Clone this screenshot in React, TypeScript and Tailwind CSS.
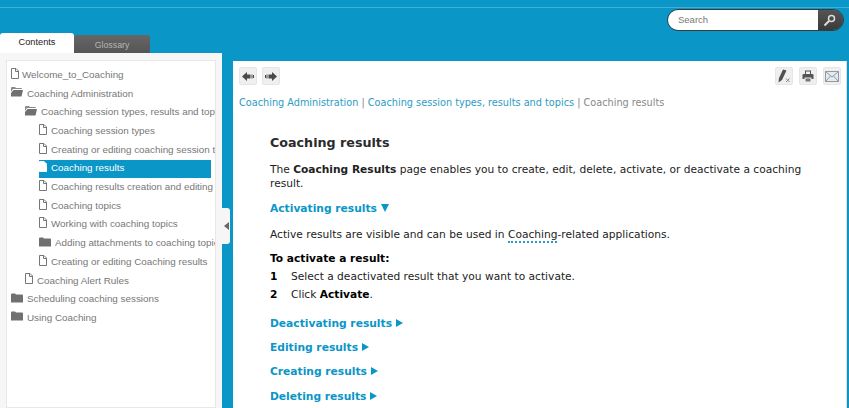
import React from "react";

const Doc = ({ active }: { active?: boolean }) => (
  <svg width="8" height="11" viewBox="0 0 8 11" className="shrink-0">
    {active ? (
      <path d="M.5.500h4.500l2.500 2.500v7.500h-7z" fill="#fff" stroke="#fff" />
    ) : (
      <path d="M.5.500h4.500l2.500 2.500v7.500h-7zM4.500.5v3h3" fill="#fff" stroke="#777" />
    )}
  </svg>
);
const Folder = () => (
  <svg width="12" height="10" viewBox="0 0 12 10" className="shrink-0">
    <path d="M0 1.500Q0 .5 1 .5h3l1 1h6q1 0 1 1V9.500H0z" fill="#707070" />
  </svg>
);
const FolderOpen = () => (
  <svg width="12" height="10" viewBox="0 0 12 10" className="shrink-0">
    <path d="M0 1Q0 0 1 0h3l1 1h5q1 0 1 1H2L0 5z" fill="#8a8a8a" />
    <path d="M2.500 3H12L10.500 9.500H0V6z" fill="#707070" />
  </svg>
);

type Row = { t: string; pl: number; k: "d" | "f" | "o"; a?: boolean; gap: number };
const rows: Row[] = [
  { t: "Welcome_to_Coaching", pl: 4, k: "d", gap: 3 },
  { t: "Coaching Administration", pl: 4, k: "o", gap: 4 },
  { t: "Coaching session types, results and topics", pl: 18, k: "o", gap: 4 },
  { t: "Coaching session types", pl: 32, k: "d", gap: 4 },
  { t: "Creating or editing coaching session types", pl: 32, k: "d", gap: 4 },
  { t: "Coaching results", pl: 32, k: "d", a: true, gap: 4 },
  { t: "Coaching results creation and editing", pl: 32, k: "d", gap: 4 },
  { t: "Coaching topics", pl: 32, k: "d", gap: 4 },
  { t: "Working with coaching topics", pl: 32, k: "d", gap: 4 },
  { t: "Adding attachments to coaching topics", pl: 32, k: "f", gap: 4 },
  { t: "Creating or editing Coaching results", pl: 32, k: "d", gap: 4 },
  { t: "Coaching Alert Rules", pl: 18, k: "d", gap: 4 },
  { t: "Scheduling coaching sessions", pl: 4, k: "f", gap: 4 },
  { t: "Using Coaching", pl: 4, k: "f", gap: 4 },
];

const ToolBtn = ({ children }: { children: React.ReactNode }) => (
  <div className="w-[18px] h-[18px] rounded-[2px] bg-[#efefef] border border-[#e6e6e6] flex items-center justify-center">
    {children}
  </div>
);

const Section = ({ t }: { t: string }) => (
  <div className="flex items-center gap-[4px] text-[#0b96c8] font-bold text-[10.700px] leading-[16px] mt-[8.300px]">
    <span>{t}</span>
    <svg width="7" height="8" viewBox="0 0 7 8" className="-translate-y-[1px]"><path d="M0 0l7 4-7 4z" fill="#0b96c8" /></svg>
  </div>
);

export default function App() {
  return (
    <div className="w-[849px] h-[408px] overflow-hidden bg-[#0b96c8] flex flex-col font-['Liberation_Sans',sans-serif]">
      <div className="h-[33px] shrink-0 flex flex-col">
        <div className="h-[7px] border-b border-[#3fb0d8] shrink-0 box-content" />
        <div className="flex justify-end pr-[5px] pt-[1px]">
          <div className="w-[177px] h-[22px] flex rounded-full overflow-hidden border border-[#3a3a3a]">
            <div className="flex-1 bg-white pl-[10px] text-[9.500px] leading-[19px] text-[#777]">Search</div>
            <div className="w-[25px] bg-gradient-to-b from-[#555] to-[#3a3a3a] flex items-center justify-center pr-[3px]">
              <svg width="13" height="13" viewBox="0 0 13 13" fill="none">
                <circle cx="8.500" cy="4.500" r="3" stroke="#ddd" strokeWidth="1.500" />
                <path d="M6 7L1.500 11.500" stroke="#ddd" strokeWidth="2" />
              </svg>
            </div>
          </div>
        </div>
      </div>
      <div className="h-[20px] shrink-0 flex items-end">
        <div className="w-[74px] h-[20px] bg-white rounded-t-[3px] text-center text-[9.200px] leading-[19px] text-[#222]">Contents</div>
        <div className="w-[76px] h-[18px] bg-gradient-to-b from-[#666] to-[#555] rounded-t-[2px] text-center text-[8.800px] leading-[20px] text-[#b5b5b5]">Glossary</div>
      </div>
      <div className="flex-1 flex min-h-0">
        <div className="relative w-[222px] shrink-0 bg-[#f6f6f6] pl-[6px] pr-[6px] pt-[7px]">
          <div className="h-full bg-white border border-[#e8e8e8] overflow-hidden pt-[5px]">
            <div className="w-full overflow-hidden">
              {rows.map((r) => (
                <div
                  key={r.t}
                  className="h-[18.700px] flex items-center whitespace-nowrap text-[9.850px] text-[#777]"
                  style={{ paddingLeft: r.pl }}
                >
                  <div className={r.a ? "flex items-center h-[18px] w-[172px] bg-[#0b96c8] text-white" : "flex items-center h-[18px]"} style={{ gap: r.gap }}>
                    <span className="-translate-y-[2px]">
                      {r.k === "d" ? <Doc active={r.a} /> : r.k === "f" ? <Folder /> : <FolderOpen />}
                    </span>
                    <span>{r.t}</span>
                  </div>
                </div>
              ))}
            </div>
          </div>
          <div className="absolute left-[216px] top-[155px] w-[14px] h-[36px] bg-[#f6f6f6] rounded-r-[3px] flex items-center justify-end pr-[1px]">
            <svg width="5" height="8" viewBox="0 0 5 8"><path d="M5 0v8L0 4z" fill="#666" /></svg>
          </div>
        </div>
        <div className="ml-[11px] w-[614px] mt-[8px] bg-white border-r border-[#ddd] font-['DejaVu_Sans',sans-serif] overflow-hidden">
          <div className="flex justify-between pl-[6px] pr-[5px] pt-[6px]">
            <div className="flex gap-[5px]">
              <ToolBtn>
                <svg width="12" height="9" viewBox="0 0 12 9"><path d="M0 4.500L5 0v2.500h3.500v4H5V9zM9.500 2.500h1v4h-1zM11 3h1v3h-1z" fill="#4a4a4a" /></svg>
              </ToolBtn>
              <ToolBtn>
                <svg width="12" height="9" viewBox="0 0 12 9"><path d="M12 4.500L7 0v2.500H3.500v4H7V9zM2.500 2.500h-1v4h1zM1 3H0v3h1z" fill="#4a4a4a" /></svg>
              </ToolBtn>
            </div>
            <div className="flex gap-[6px]">
              <ToolBtn>
                <svg width="14" height="14" viewBox="0 0 14 14">
                  <path d="M6 .500L9.500 1.500 5 11 1.500 13.500 2 9z" fill="#505050" />
                  <path d="M9 9.500l3.500 3.500M12.500 9.500L9 13" stroke="#888" strokeWidth="1" />
                </svg>
              </ToolBtn>
              <ToolBtn>
                <svg width="12" height="12" viewBox="0 0 12 12">
                  <path d="M3 .500h6v3.500H8V1.500H4V4H3z" fill="#555" />
                  <path d="M1.500 4h9q1 0 1 1v4h-2V7.500h-7V9h-2V5q0-1 1-1z" fill="#555" />
                  <path d="M3.500 8.500h5v3h-5z" fill="#777" />
                </svg>
              </ToolBtn>
              <ToolBtn>
                <svg width="14" height="11" viewBox="0 0 14 11" fill="none">
                  <rect x=".5" y=".5" width="13" height="10" fill="#e4ebf0" stroke="#8f9aa3" />
                  <path d="M.5.500l6.500 5.500 6.500-5.500M.5 10.500l5-5.500M13.500 10.500l-5-5.500" stroke="#8f9aa3" />
                </svg>
              </ToolBtn>
            </div>
          </div>
          <div className="pl-[6px] mt-[10px] font-['DejaVu_Sans_Condensed',sans-serif] text-[10.800px] leading-[16px] text-[#2d9cc4] whitespace-nowrap">
            Coaching Administration <span className="text-[#888]">|</span> Coaching session types, results and topics{" "}
            <span className="text-[#888]">|</span> <span className="text-[#888]">Coaching results</span>
          </div>
          <div className="pl-[37px] pt-[22px] pr-[30px] text-[10.650px] text-[#222]">
            <div className="text-[12.700px] font-bold leading-[20px] text-[#2b2b2b]">Coaching results</div>
            <div className="mt-[10px] leading-[14px] w-[540px]">
              The <b>Coaching Results</b> page enables you to create, edit, delete, activate, or deactivate a coaching result.
            </div>
            <div className="flex items-center gap-[4px] text-[#0b96c8] font-bold text-[10.700px] leading-[16px] mt-[9.500px]">
              <span>Activating results</span>
              <svg width="8" height="8" viewBox="0 0 8 8" className="-translate-y-[1px]"><path d="M0 0h8L4 8z" fill="#0b96c8" /></svg>
            </div>
            <div className="mt-[10px] leading-[16px]">
              Active results are visible and can be used in{" "}
              <span className="border-b-2 border-dotted border-[#2d9cc4]">Coaching</span>-related applications.
            </div>
            <div className="mt-[8px] font-bold leading-[16px] text-black">To activate a result:</div>
            <div className="mt-[2px] flex leading-[16px]">
              <b className="w-[21px] text-black">1</b>
              <span>Select a deactivated result that you want to activate.</span>
            </div>
            <div className="mt-[2px] flex leading-[16px]">
              <b className="w-[21px] text-black">2</b>
              <span>Click <b className="text-black">Activate</b>.</span>
            </div>
            <div className="h-[5px]" />
            <Section t="Deactivating results" />
            <Section t="Editing results" />
            <Section t="Creating results" />
            <Section t="Deleting results" />
          </div>
        </div>
      </div>
    </div>
  );
}
